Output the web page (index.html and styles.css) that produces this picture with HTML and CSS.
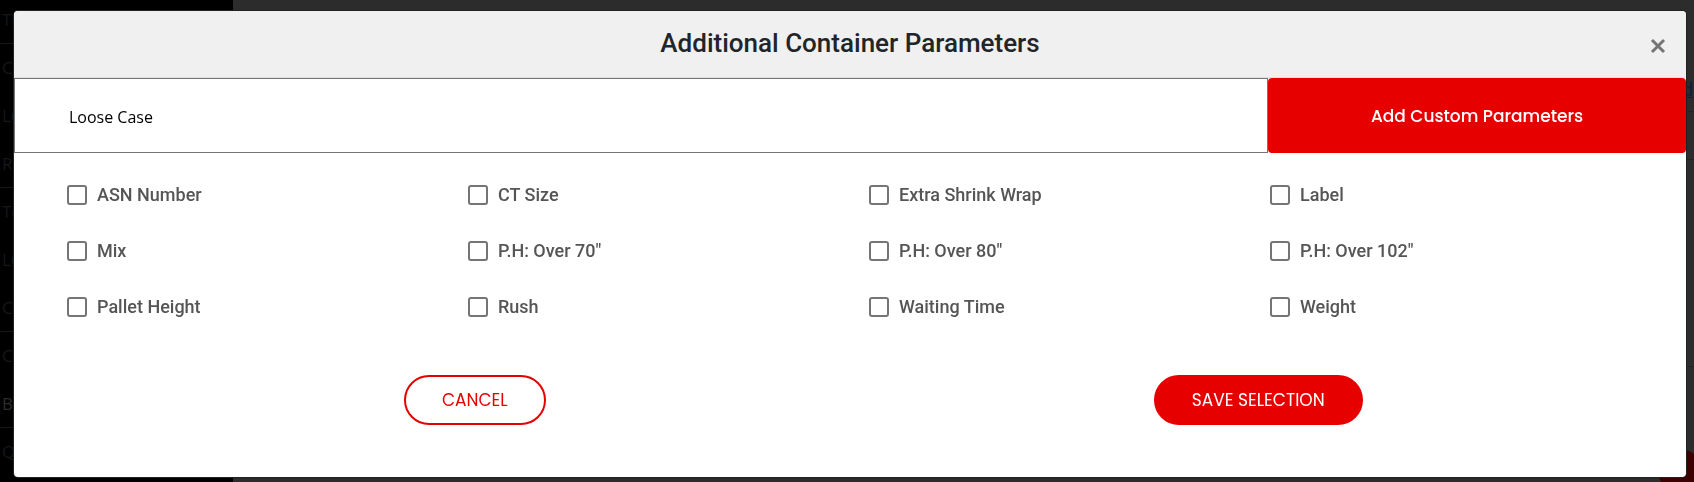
FILE: index.html
```html
<!DOCTYPE html>
<html lang="en">
<head>
<meta charset="utf-8">
<title>Additional Container Parameters</title>
<link rel="stylesheet" href="styles.css">
</head>
<body>
<div class="page">
  <nav class="sidebar">
    <ul class="menu">
      <li class="menu-item ruled">Ti</li>
      <li class="menu-item">C</li>
      <li class="menu-item">Lu</li>
      <li class="menu-item ruled">R</li>
      <li class="menu-item">Te</li>
      <li class="menu-item">Lu</li>
      <li class="menu-item ruled">C</li>
      <li class="menu-item">C</li>
      <li class="menu-item ruled active">B</li>
      <li class="menu-item">Q</li>
    </ul>
  </nav>
  <main class="content">
    <div class="row row-link"><a class="more" href="#">d</a></div>
    <div class="row row-short"></div>
    <div class="row row-tall"></div>
  </main>
  <span class="fab"></span>
</div>

<div class="overlay">
  <form class="modal" role="dialog" aria-labelledby="modal-title">
    <header class="modal-header">
      <h1 class="modal-title" id="modal-title">Additional Container Parameters</h1>
      <button class="close" type="button" aria-label="Close">
        <svg class="close-icon" viewBox="0 0 16 16" aria-hidden="true"><path d="M2 2l12 12M14 2L2 14"/></svg>
      </button>
    </header>
    <div class="custom">
      <input class="custom-input" type="text" value="Loose Case" aria-label="Custom parameter">
      <button class="custom-add" type="button">Add Custom Parameters</button>
    </div>
    <div class="options">
      <label class="option"><input class="box" type="checkbox">ASN Number</label>
      <label class="option"><input class="box" type="checkbox">CT Size</label>
      <label class="option"><input class="box" type="checkbox">Extra Shrink Wrap</label>
      <label class="option"><input class="box" type="checkbox">Label</label>
      <label class="option"><input class="box" type="checkbox">Mix</label>
      <label class="option"><input class="box" type="checkbox">P.H: Over 70"</label>
      <label class="option"><input class="box" type="checkbox">P.H: Over 80"</label>
      <label class="option"><input class="box" type="checkbox">P.H: Over 102"</label>
      <label class="option"><input class="box" type="checkbox">Pallet Height</label>
      <label class="option"><input class="box" type="checkbox">Rush</label>
      <label class="option"><input class="box" type="checkbox">Waiting Time</label>
      <label class="option"><input class="box" type="checkbox">Weight</label>
    </div>
    <footer class="actions">
      <button class="pill pill-outline" type="button">CANCEL</button>
      <button class="pill pill-solid" type="submit">SAVE SELECTION</button>
    </footer>
  </form>
</div>
</body>
</html>
```

FILE: styles.css
```css
* {
  box-sizing: border-box;
}

body {
  margin: 0;
  font-family: Roboto, sans-serif;
  background: #2c2c2c;
  overflow: hidden;
}

.page {
  position: relative;
  display: flex;
  height: 100vh;
  overflow: hidden;
}

.sidebar {
  flex: 0 0 233px;
  background: #000;
}

.menu {
  margin: -4px 0 0;
  padding: 0;
  list-style: none;
}

.menu-item {
  height: 48px;
  padding-left: 2px;
  border-bottom: 1px solid transparent;
  font: 17px/47px "Open Sans", sans-serif;
  color: #15171a;
}

.ruled {
  border-bottom-color: #151515;
}

.active {
  color: #2c2c2c;
}

.content {
  flex: 1;
}

.row {
  border-bottom: 1px solid #242424;
}

.row-link {
  height: 112px;
  padding: 77px 1px 0 0;
  text-align: right;
}

.row-short {
  height: 48px;
}

.row-tall {
  height: 207px;
}

.more {
  font: 18px/24px "Open Sans", sans-serif;
  color: #0b2148;
}

.fab {
  position: absolute;
  right: -8px;
  bottom: -11px;
  width: 44px;
  height: 44px;
  border-radius: 50%;
  background: #3d0000;
}

.overlay {
  position: fixed;
  inset: 0;
  padding: 11px 8px 5px 14px;
}

.modal {
  border-radius: 4px;
  background: #fff;
  box-shadow: 0 0 0 1px #222;
  overflow: hidden;
}

.modal-header {
  display: grid;
  grid-template-columns: 1fr auto 1fr;
  align-items: center;
  padding: 16px 20px 18px;
  border-bottom: 1px solid #dee2e6;
  background: #f0f0f0;
}

.modal-title {
  grid-column: 2;
  margin: 0;
  font-size: 26px;
  line-height: 32px;
  font-weight: 500;
  color: #212529;
}

.close {
  justify-self: end;
  display: flex;
  margin-top: 6px;
  padding: 0;
  border: 0;
  background: none;
}

.close-icon {
  width: 16px;
  height: 16px;
  fill: none;
  stroke: #757575;
  stroke-width: 3;
}

.custom {
  display: grid;
  grid-template-columns: 3fr 1fr;
}

.custom-input {
  min-width: 0;
  height: 75px;
  padding: 2px 54px 0;
  border: 1px solid #767676;
  border-radius: 0;
  font: 16px "Open Sans", sans-serif;
  color: #000;
}

.custom-add {
  border: 0;
  border-radius: 4px;
  background: #e60000;
  font: 500 17px Poppins, Inter, sans-serif;
  color: #fff;
}

.options {
  display: grid;
  grid-template-columns: repeat(4, 1fr);
  row-gap: 32px;
  padding: 30px 15px 0 53px;
}

.option {
  display: flex;
  align-items: center;
  gap: 10px;
  font-size: 18px;
  line-height: 24px;
  font-weight: 500;
  color: #555;
}

.box {
  appearance: none;
  width: 20px;
  height: 20px;
  margin: 0;
  border: 2px solid #757575;
  border-radius: 3px;
  background: #fff;
}

.box:checked {
  background: #757575;
}

.actions {
  display: grid;
  grid-template-columns: 1fr 1fr;
  justify-items: center;
  padding: 56px 36px 52px 69px;
}

.pill {
  height: 50px;
  padding: 0 36px;
  border: 2px solid #e60000;
  border-radius: 25px;
  font: 17px Poppins, Inter, sans-serif;
}

.pill-outline {
  background: #fff;
  color: #e60000;
}

.pill-solid {
  background: #e60000;
  color: #fff;
}
```
